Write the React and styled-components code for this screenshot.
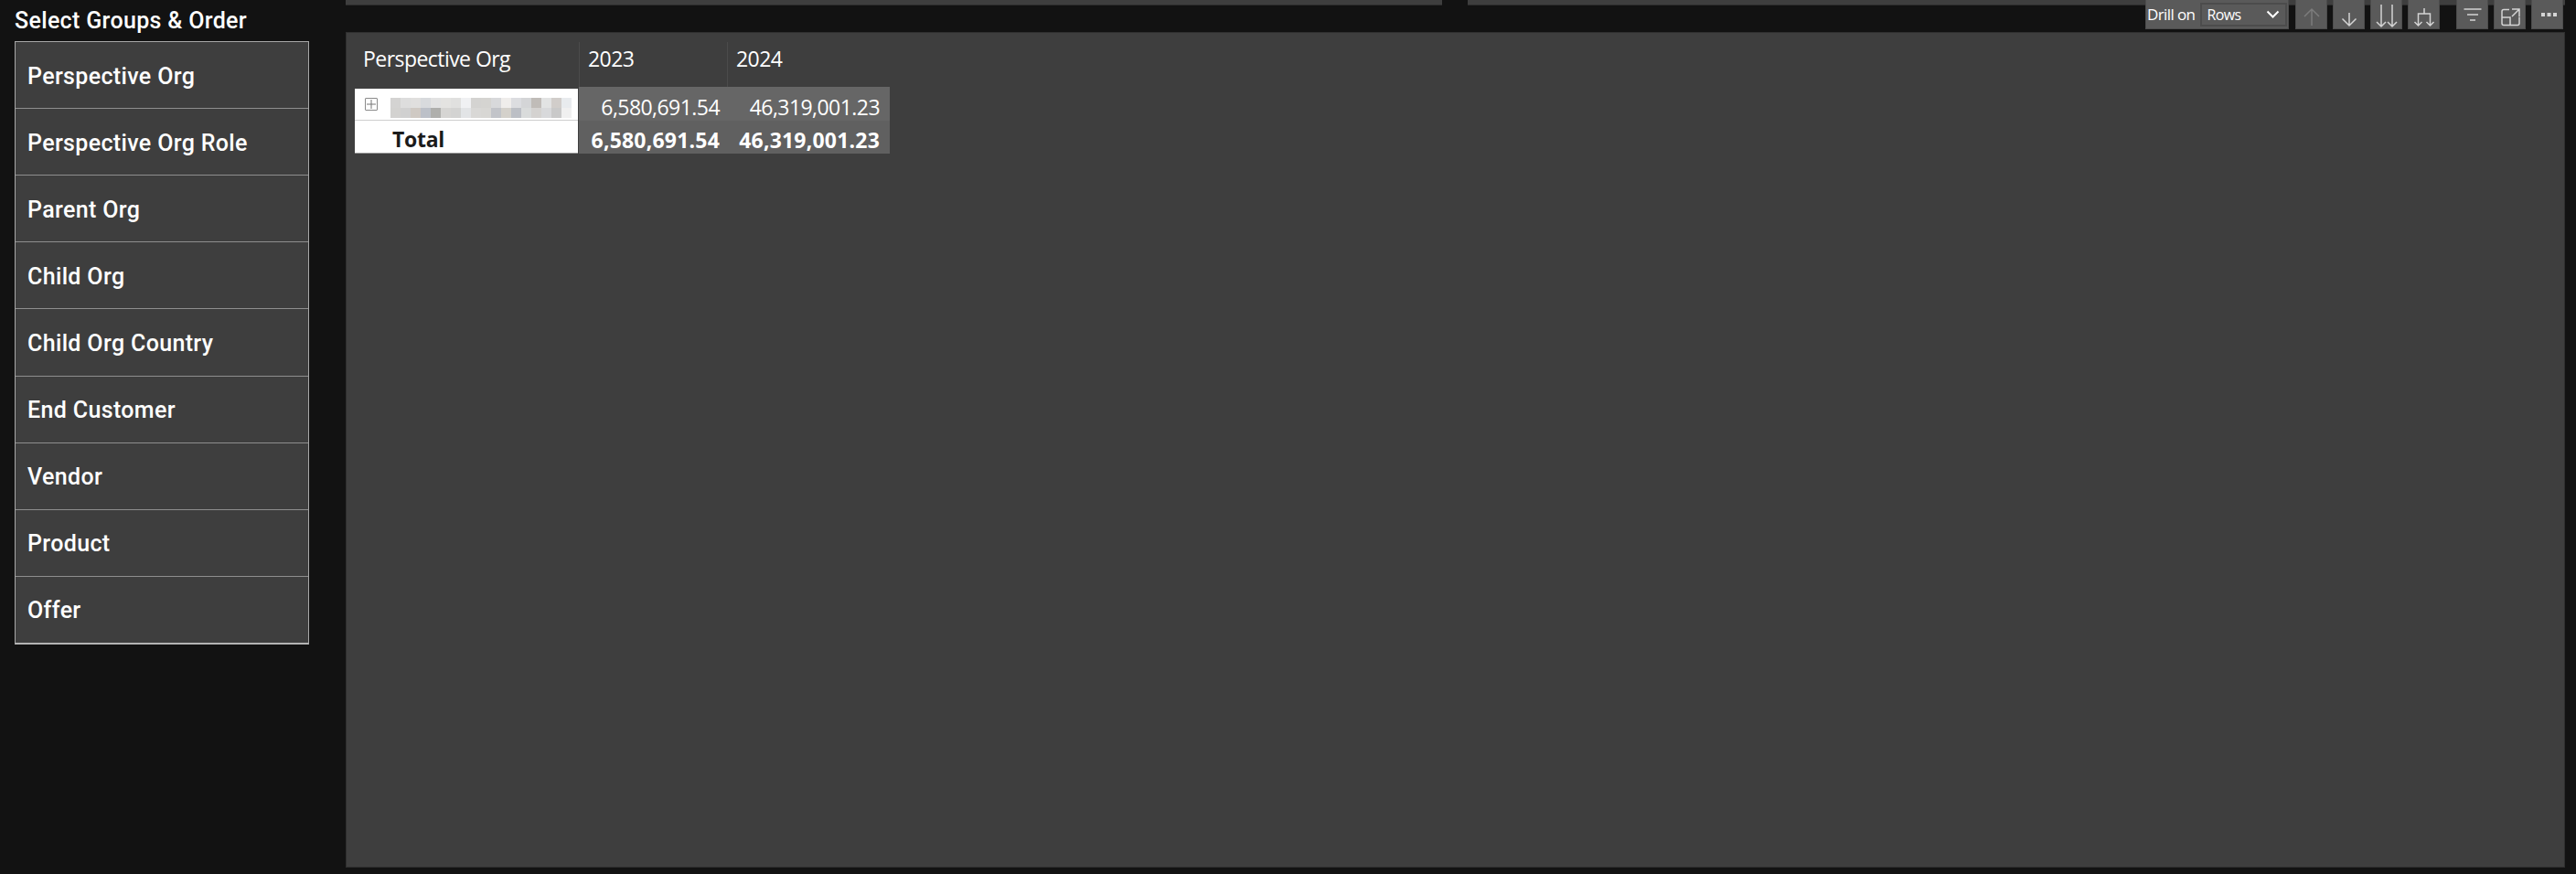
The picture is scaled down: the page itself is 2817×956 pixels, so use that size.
import React from 'react';
import styled, { createGlobalStyle } from 'styled-components';

const GlobalStyle = createGlobalStyle`
  html, body {
    margin: 0;
    height: 100%;
    background: #121212;
  }
`;

const Page = styled.div`
  box-sizing: border-box;
  display: flex;
  width: 2817px;
  height: 956px;
  padding: 0 12px 7px 16px;
  background: #121212;
  overflow: hidden;
`;

const Sidebar = styled.aside`
  display: flex;
  flex-direction: column;
  flex: 0 0 322px;
  margin-right: 40px;
`;

const SidebarTitle = styled.div`
  height: 45px;
  padding-top: 7px;
  box-sizing: border-box;
  color: #fff;
  font-family: 'Roboto', sans-serif;
  font-size: 25px;
  font-weight: 500;
  line-height: 32px;
  letter-spacing: 0.33px;
`;

const GroupList = styled.div`
  display: flex;
  flex-direction: column;
  box-sizing: border-box;
  height: 660px;
  border: 1px solid #a8a8a8;
  border-bottom: 2px solid #b4b4b4;
`;

const GroupItem = styled.div`
  display: flex;
  flex: 1;
  align-items: center;
  padding-left: 13px;
  padding-top: 2px;
  background: #3e3e3e;
  border-top: ${(p) => (p.$first ? '0' : '1px solid #8e8e8e')};
  color: #fff;
  font-family: 'Roboto', sans-serif;
  font-size: 25px;
  font-weight: 500;
  letter-spacing: 0.35px;
`;

const Content = styled.main`
  position: relative;
  display: flex;
  flex: 1;
  flex-direction: column;
`;

const TopStrip = styled.div`
  display: flex;
  gap: 28px;
  height: 35px;
  flex: 0 0 35px;
`;

const StripPanel = styled.div`
  flex: ${(p) => (p.$wide ? '0 0 1199px' : '1')};
  height: 6px;
  background: #3e3e3e;
  border-bottom: 1px solid #2c2c2c;
  box-sizing: border-box;
`;

const Toolbar = styled.div`
  position: absolute;
  top: 0;
  right: 2px;
  display: flex;
  height: 32px;
`;

const DrillBox = styled.div`
  display: flex;
  align-items: center;
  box-sizing: border-box;
  width: 157px;
  height: 32px;
  margin-right: 7px;
  padding-left: 1px;
  background: #5a5a5a;
  border: 1px solid #4c4c4c;
  border-top: 0;
  color: #fff;
  font-family: 'Open Sans', sans-serif;
  font-size: 17px;
  letter-spacing: -0.6px;
`;

const DrillSelect = styled.div`
  display: flex;
  align-items: center;
  justify-content: space-between;
  box-sizing: border-box;
  width: 95px;
  height: 26px;
  margin-left: 6px;
  padding: 0 6px 0 5px;
  background: #5a5a5a;
  border: 2px solid #4c4c4c;
  font-size: 16px;
`;

const ToolButton = styled.div`
  display: flex;
  align-items: center;
  justify-content: center;
  box-sizing: border-box;
  width: 35px;
  height: 32px;
  margin-right: ${(p) => p.$gap || 6}px;
  background: #5a5a5a;
  border: 1px solid #4c4c4c;
  border-top: 0;
  color: ${(p) => (p.$dim ? '#7c7c7c' : '#d4d4d4')};

  &:last-child {
    margin-right: 0;
  }
`;

const IconSvg = styled.svg`
  flex: 0 0 32px;
  width: 32px;
  height: 32px;
  margin-top: 1px;
`;

const Panel = styled.section`
  flex: 1;
  box-sizing: border-box;
  padding: 10px 0 0 9px;
  background: #3e3e3e;
  border: 1px solid #2f2f2f;
`;

const Matrix = styled.div`
  display: grid;
  grid-template-columns: 245px 162px 178px;
  grid-template-rows: 49px 37px 36px;
  font-family: 'Open Sans', sans-serif;
  font-size: 23px;
  letter-spacing: -0.55px;
`;

const HeaderCell = styled.div`
  display: flex;
  align-items: center;
  box-sizing: border-box;
  padding-left: ${(p) => p.$pad}px;
  padding-bottom: 14px;
  color: #fff;
  border-left: ${(p) => (p.$sep ? '1px solid #4b4b4b' : '0')};
`;

const RowHead = styled.div`
  display: flex;
  align-items: center;
  box-sizing: border-box;
  margin-right: 1px;
  background: #fff;
  color: #1b1b1b;
  font-weight: 700;
  letter-spacing: -0.3px;
  ${(p) => p.$top && 'margin-top: 2px; border-bottom: 1px solid #cfcfcf; padding: 7px 0 0 11px;'}
  ${(p) => p.$total && 'padding-left: 41px; padding-top: 4px; border-bottom: 1px solid #9c9c9c;'}
`;

const ExpandBox = styled.span`
  display: flex;
  align-items: center;
  justify-content: center;
  box-sizing: border-box;
  width: 14px;
  height: 14px;
  margin-right: 14px;
  margin-bottom: 8px;
  border: 1px solid #8a8a8a;
  border-radius: 1px;
  color: #777;
`;

const Mosaic = styled.div`
  display: grid;
  grid-template-columns: repeat(18, 11px);
  grid-auto-rows: 11px;
`;

const Tile = styled.span`
  background: ${(p) => p.$c};
`;

const ValueCell = styled.div`
  display: flex;
  align-items: center;
  justify-content: flex-end;
  padding-right: ${(p) => p.$right}px;
  padding-top: 6px;
  background: ${(p) => (p.$total ? '#606060' : '#666666')};
  color: #fff;
  font-weight: ${(p) => (p.$total ? 700 : 400)};
  letter-spacing: ${(p) => (p.$total ? '0.2px' : '-0.55px')};
`;

const groups = [
  'Perspective Org',
  'Perspective Org Role',
  'Parent Org',
  'Child Org',
  'Child Org Country',
  'End Customer',
  'Vendor',
  'Product',
  'Offer',
];

// the row label is pixelated out in the picture
const tiles = [
  '#d4d3d2', '#dddddd', '#e0dfde', '#d8dadd', '#e2e2e2', '#e4e3e1', '#e0e0df', '#f0f1f3', '#d4d3d1',
  '#d5d4d1', '#d8d9db', '#efedeb', '#dcdde0', '#d4d5d7', '#c0bcb8', '#e2e3e3', '#d1cdca', '#e8ebee',
  '#d3d2d0', '#d0d0d0', '#cfc9c3', '#bcc0c8', '#afafac', '#d6d5d3', '#d3d3d2', '#e2e4e6', '#d9d8d6',
  '#d8d7d4', '#c2c4c9', '#d4d1cb', '#bcbfc5', '#d9dbdb', '#d4d2d0', '#d8d9db', '#c9c9c9', '#f0f0f0',
];

const Icon = ({ children }) => (
  <IconSvg viewBox="0 0 32 32" fill="none" stroke="currentColor" strokeWidth="1.5">
    {children}
  </IconSvg>
);

const App = () => (
  <>
    <GlobalStyle />
    <Page>
      <Sidebar>
        <SidebarTitle>Select Groups &amp; Order</SidebarTitle>
        <GroupList>
          {groups.map((g, i) => (
            <GroupItem key={g} $first={i === 0}>{g}</GroupItem>
          ))}
        </GroupList>
      </Sidebar>

      <Content>
        <TopStrip>
          <StripPanel $wide />
          <StripPanel />
        </TopStrip>

        <Toolbar>
          <DrillBox>
            Drill on
            <DrillSelect>
              Rows
              <svg width="15" height="10" viewBox="0 0 15 10" fill="none" stroke="#fff" strokeWidth="2">
                <path d="M1.5 1.5 7.5 7.5 13.5 1.5" />
              </svg>
            </DrillSelect>
          </DrillBox>
          <ToolButton $dim>
            <Icon><path d="M16 28V10M8 18l8-8 8 8" /></Icon>
          </ToolButton>
          <ToolButton>
            <Icon><path d="M16 14v14M8.5 20.5 16 28l7.5-7.5" /></Icon>
          </ToolButton>
          <ToolButton>
            <Icon><path d="M10 5v24M5 24l5 5 5-5M22 5v24M17 24l5 5 5-5" /></Icon>
          </ToolButton>
          <ToolButton $gap={18}>
            <Icon><path d="M16 9v6M9.5 28V15h13v13M5.5 24l4 4 4-4M18.5 24l4 4 4-4" /></Icon>
          </ToolButton>
          <ToolButton>
            <Icon><path d="M6.5 10h19M10 16h12M13 22h6" /></Icon>
          </ToolButton>
          <ToolButton>
            <Icon><path d="M15 10.5H9a2 2 0 0 0-2 2v13a2 2 0 0 0 2 2h15a2 2 0 0 0 2-2v-7M7 19h9v8.5M18 10h8v8M26 10l-8 8" /></Icon>
          </ToolButton>
          <ToolButton>
            <Icon>
              <path strokeWidth="4" strokeDasharray="4 2.5" d="M9 16h17" />
            </Icon>
          </ToolButton>
        </Toolbar>

        <Panel>
          <Matrix>
            <HeaderCell $pad={9}>Perspective Org</HeaderCell>
            <HeaderCell $pad={9} $sep>2023</HeaderCell>
            <HeaderCell $pad={9} $sep>2024</HeaderCell>

            <RowHead $top>
              <ExpandBox>
                <svg width="10" height="10" viewBox="0 0 10 10" stroke="currentColor" strokeWidth="1">
                  <path d="M5 0v10M0 5h10" />
                </svg>
              </ExpandBox>
              <Mosaic>
                {tiles.map((c, i) => <Tile key={i} $c={c} />)}
              </Mosaic>
            </RowHead>
            <ValueCell $right={8}>6,580,691.54</ValueCell>
            <ValueCell $right={11}>46,319,001.23</ValueCell>

            <RowHead $total>Total</RowHead>
            <ValueCell $right={8} $total>6,580,691.54</ValueCell>
            <ValueCell $right={11} $total>46,319,001.23</ValueCell>
          </Matrix>
        </Panel>
      </Content>
    </Page>
  </>
);

export default App;
